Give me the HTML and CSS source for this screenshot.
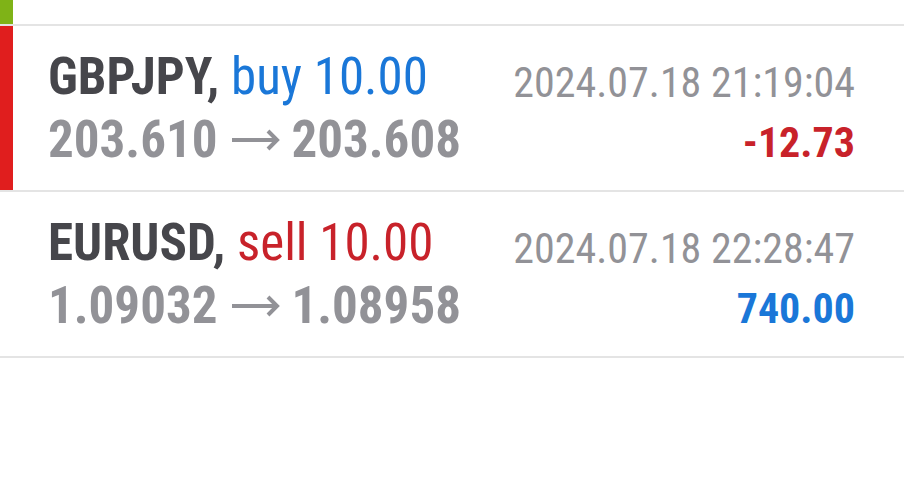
FILE: index.html
```html
<!DOCTYPE html>
<html lang="en">
<head>
    <meta charset="UTF-8">
    <meta name="viewport" content="width=device-width, initial-scale=1.0">
    <title>History</title>
    <link rel="stylesheet" href="styles.css">
</head>
<body>
    <div class="deal deal-prev">
        <div class="mark mark-green"></div>
        <div class="deal-body"></div>
    </div>

    <div class="deal">
        <div class="mark mark-red"></div>
        <div class="deal-body">
            <div class="deal-left">
                <div class="line"><span class="symbol">GBPJPY,</span> <span class="buy">buy 10.00</span></div>
                <div class="line prices">203.610<svg class="arrow" viewBox="0 0 48 22"><path d="M0 11H45M36 2L45 11L36 20"/></svg>203.608</div>
            </div>
            <div class="deal-right">
                <div class="time">2024.07.18 21:19:04</div>
                <div class="profit loss">-12.73</div>
            </div>
        </div>
    </div>

    <div class="deal">
        <div class="mark"></div>
        <div class="deal-body">
            <div class="deal-left">
                <div class="line"><span class="symbol">EURUSD,</span> <span class="sell">sell 10.00</span></div>
                <div class="line prices">1.09032<svg class="arrow" viewBox="0 0 48 22"><path d="M0 11H45M36 2L45 11L36 20"/></svg>1.08958</div>
            </div>
            <div class="deal-right">
                <div class="time">2024.07.18 22:28:47</div>
                <div class="profit gain">740.00</div>
            </div>
        </div>
    </div>
</body>
</html>
```
FILE: styles.css
```css
body {
    font-family: "Roboto Condensed", Roboto, sans-serif;
    background-color: #fff;
    margin: 0;
    padding: 0;
}
.deal {
    display: flex;
    height: 164px;
    border-bottom: 2px solid #e4e4e4;
}
.deal-prev {
    height: 24px;
}
.mark {
    width: 13px;
    flex-shrink: 0;
}
.mark-green {
    background-color: #7fb317;
}
.mark-red {
    background-color: #e01e1e;
}
.deal-body {
    flex: 1;
    display: flex;
    justify-content: space-between;
    padding: 0 49px 0 35px;
}
.deal-left {
    padding-top: 19px;
}
.line {
    font-size: 51px;
    line-height: 63px;
    white-space: nowrap;
}
.symbol {
    font-weight: bold;
    color: #46464b;
}
.buy {
    color: #1a77d8;
}
.sell {
    color: #c8222a;
}
.prices {
    font-weight: bold;
    color: #929297;
}
.arrow {
    width: 48px;
    height: 22px;
    margin: 0 11px 0 15px;
    vertical-align: 6px;
    fill: none;
    stroke: #929297;
    stroke-width: 4;
}
.deal-right {
    padding-top: 27px;
    text-align: right;
}
.time {
    font-size: 42px;
    line-height: 60px;
    color: #929297;
    white-space: nowrap;
}
.profit {
    font-size: 42px;
    line-height: 60px;
    font-weight: bold;
}
.loss {
    color: #c8222a;
}
.gain {
    color: #1a77d8;
}
```
